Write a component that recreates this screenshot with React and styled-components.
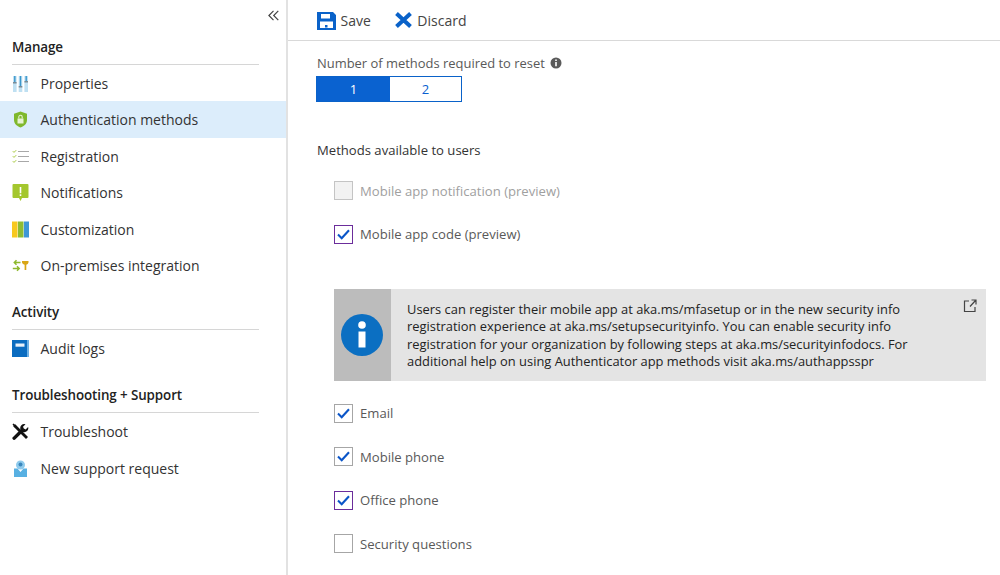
import React from 'react';
import styled, { createGlobalStyle } from 'styled-components';

const Global = createGlobalStyle`
  html, body { margin: 0; padding: 0; background: #fff; overflow: hidden; }
  body { font-family: "Open Sans", "Noto Sans", "Liberation Sans", sans-serif; }
`;
const Page = styled.div`display: flex; width: 1000px; height: 575px; overflow: hidden; background: #fff;`;
const Sidebar = styled.aside`width: 286px; flex: none; border-right: 2px solid #e2e2e2; display: flex; flex-direction: column;`;
const CollapseRow = styled.div`height: 30px; display: flex; align-items: center; justify-content: flex-end; padding-right: 7px;`;
const SectionHeading = styled.h2`
  margin: ${p => (p.$first ? '0' : '12px')} 27px 0 12px; height: 33.5px; box-sizing: content-box;
  border-bottom: 1px solid #d6d6d6; display: flex; align-items: center;
  font-size: 13.4px; font-weight: 600; color: #222; letter-spacing: -0.1px;
`;
const NavList = styled.div`display: flex; flex-direction: column;`;
const NavRow = styled.div`
  height: 36.5px; box-sizing: border-box; padding-top: 0.8px; display: flex; align-items: center; padding-left: 12px; gap: 11.5px;
  background: ${p => (p.$active ? '#dcedfb' : 'transparent')};
  font-size: 14px; color: #333;
`;
const NavIcon = styled.svg`width: 17px; height: 17px; flex: none;`;
const Main = styled.main`flex: 1; display: flex; flex-direction: column; min-width: 0;`;
const Toolbar = styled.div`height: 40px; flex: none; border-bottom: 1px solid #d9d9d9; display: flex; align-items: center; padding-left: 29px; gap: 24px;`;
const ToolButton = styled.div`display: flex; align-items: center; gap: 4.5px; font-size: 14px; color: #444;`;
const Content = styled.div`padding: 13px 14px 0 29px; display: flex; flex-direction: column;`;
const FieldLabel = styled.div`display: flex; align-items: center; gap: 5px; height: 18px; font-size: 12.95px; color: #595959;`;
const Segments = styled.div`display: flex; width: 146px; height: 26px; margin: 4px 0 0 -1px; box-sizing: border-box; border: 1.5px solid #0a62c9;`;
const Segment = styled.div`
  flex: ${p => (p.$on ? '0 0 73px' : '1')}; display: flex; align-items: center; justify-content: center;
  font-size: 13px; background: ${p => (p.$on ? '#0a62d0' : '#fff')}; color: ${p => (p.$on ? '#fff' : '#0a5fd0')};
`;
const SectionTitle = styled.div`margin-top: 39px; height: 18px; display: flex; align-items: center; font-size: 13.1px; color: #333;`;
const CheckList = styled.div`display: flex; flex-direction: column; margin-left: 17px; margin-top: ${p => p.$top || 0}px;`;
const CheckRow = styled.div`height: 43.5px; display: flex; align-items: center; gap: 7px; font-size: 13.1px; color: ${p => (p.$off ? '#a0a0a0' : '#595959')};`;
const Box = styled.span`
  width: 19px; height: 19px; box-sizing: border-box; flex: none; display: flex; align-items: center; justify-content: center;
  border: 1px solid ${p => (p.$focus ? '#6b2d9b' : p.$off ? '#c4c4c4' : '#a6a6a6')};
  background: ${p => (p.$off ? '#f2f2f2' : '#fff')};
`;
const InfoBox = styled.div`margin: 33px 0 10.5px 17px; width: 652px; height: 92px; display: flex; background: #e4e4e4; position: relative;`;
const InfoSide = styled.div`width: 57px; flex: none; box-sizing: border-box; padding-right: 1px; background: #bcbcbc; display: flex; align-items: center; justify-content: center;`;
const InfoText = styled.p`margin: 0; padding: 11.5px 0 0 16px; width: 540px; font-size: 12.9px; line-height: 17.6px; color: #222;`;
const OpenLink = styled.svg`position: absolute; top: 10px; right: 9px; width: 14px; height: 14px;`;

const Check = () => (
  <svg width="13" height="11" viewBox="0 0 13 11"><path d="M1 5.6 4.7 9.2 12 1.2" fill="none" stroke="#0a55c8" strokeWidth="2.1" /></svg>
);

const Item = ({ checked, focus, off, children }) => (
  <CheckRow $off={off}>
    <Box $focus={focus} $off={off}>{checked && <Check />}</Box>
    {children}
  </CheckRow>
);

const icons = {
  properties: (
    <NavIcon viewBox="0 0 17 17">
      <path d="M1 1h3.600v16H1zM6.700 1h3.600v16H6.700zM12.400 1h3.600v16h-3.600z" fill="#bfe0f2" />
      <path d="M2.100 1h1.400v6H2.100zM7.800 1h1.400v10H7.800zM13.500 1h1.400v5h-1.400z" fill="#3c97cc" />
      <path d="M1 7h3.600v1.600H1zM6.700 11h3.600v1.600H6.700zM12.400 6h3.600v1.600h-3.600z" fill="#7b8b96" />
    </NavIcon>
  ),
  auth: (
    <NavIcon viewBox="0 0 17 17">
      <path d="M8.500.5 15 2.800v6c0 4-3 6.500-6.500 7.700C5 15.300 2 12.800 2 8.800v-6z" fill="#7fb82c" />
      <path d="M5.500 7.500h6v5h-6z" fill="#e8f3d2" />
      <path d="M6.800 7.500V6a1.700 1.700 0 0 1 3.400 0v1.500" fill="none" stroke="#e8f3d2" strokeWidth="1.100" />
    </NavIcon>
  ),
  registration: (
    <NavIcon viewBox="0 0 17 17">
      <path d="M6 3.500h11M6 8.500h11M6 13.500h11" stroke="#a8a8a8" strokeWidth="1.200" />
      <path d="M.8 3.200 2 4.400 4.200 2.200M.8 8.200 2 9.400 4.200 7.200M.8 13.200 2 14.400 4.200 12.200" fill="none" stroke="#a6c83c" strokeWidth="1" />
    </NavIcon>
  ),
  notifications: (
    <NavIcon viewBox="0 0 17 17">
      <path d="M1.500 0h14a1 1 0 0 1 1 1v12a1 1 0 0 1-1 1H10l-1.500 3L7 14H1.500a1 1 0 0 1-1-1V1a1 1 0 0 1 1-1z" fill="#a4c72e" />
      <path d="M7.700 3h1.600v6.200H7.700zM7.700 10.300h1.600v1.700H7.700z" fill="#fff" />
    </NavIcon>
  ),
  customization: (
    <NavIcon viewBox="0 0 17 17">
      <path d="M0 .5h5v16H0z" fill="#f8c81e" />
      <path d="M6 .5h5v16H6z" fill="#8ebc33" />
      <path d="M12 .5h5v16h-5z" fill="#3e97d6" />
      <path d="M5 .5h1v16H5z" fill="#f5e08a" />
      <path d="M11 .5h1v16h-1z" fill="#b7d8a0" />
    </NavIcon>
  ),
  premises: (
    <NavIcon viewBox="0 0 17 17">
      <path d="M8.500 5.500H2.500M4.500 3.300 2.300 5.500l2.200 2.200M.8 11.500h6M5 9.300 7.200 11.500 5 13.700" fill="none" stroke="#8eb92d" strokeWidth="1.500" />
      <path d="M10 4h6.500v1.500a3 3 0 0 1-2.200 2.300V13h-1.700V7.800A3 3 0 0 1 10 5.500z" fill="#d9a616" />
    </NavIcon>
  ),
  audit: (
    <NavIcon viewBox="0 0 17 17">
      <path d="M0 0h16v17H0z" fill="#0b6cc0" />
      <path d="M15 0h2v17h-2z" fill="#6db0e4" />
      <path d="M3.500 3.500h9v3.200h-9z" fill="#e8f1fa" />
    </NavIcon>
  ),
  trouble: (
    <NavIcon viewBox="0 0 17 17">
      <path d="M1.200 3.200 3.200 1.200 16 14l-2 2z" fill="#111" />
      <path d="M.5 1.500 1.500.5l3 2.500-1.500 1.500z" fill="#111" />
      <path d="M1 14l7.500-7.500a4 4 0 0 1 5-5.200L11 3.800l.8 1.800 1.800.8 2.500-2.500a4 4 0 0 1-5.200 5L3.200 16.500a1.500 1.500 0 0 1-2.200-2.500z" fill="#111" />
    </NavIcon>
  ),
  support: (
    <NavIcon viewBox="0 0 17 17">
      <path d="M2 8.500h3.500L8.500 12l3-3.500H15V17H2z" fill="#58b0e2" />
      <circle cx="8.500" cy="5" r="4.500" fill="#8fcbed" />
      <circle cx="8.500" cy="4.500" r="2" fill="#3a87bd" />
    </NavIcon>
  ),
};

const manage = [
  ['properties', 'Properties'], ['auth', 'Authentication methods'], ['registration', 'Registration'],
  ['notifications', 'Notifications'], ['customization', 'Customization'], ['premises', 'On-premises integration'],
];

export default function App() {
  return (
    <Page>
      <Global />
      <Sidebar>
        <CollapseRow>
          <svg width="11" height="11" viewBox="0 0 11 11"><path d="M5.500.8.900 5.500l4.600 4.700M10.300.8 5.700 5.500l4.600 4.700" fill="none" stroke="#444" strokeWidth="1.200" /></svg>
        </CollapseRow>
        <SectionHeading $first>Manage</SectionHeading>
        <NavList>
          {manage.map(([k, t]) => <NavRow key={k} $active={k === 'auth'}>{icons[k]}{t}</NavRow>)}
        </NavList>
        <SectionHeading>Activity</SectionHeading>
        <NavList><NavRow>{icons.audit}Audit logs</NavRow></NavList>
        <SectionHeading>Troubleshooting + Support</SectionHeading>
        <NavList>
          <NavRow>{icons.trouble}Troubleshoot</NavRow>
          <NavRow>{icons.support}New support request</NavRow>
        </NavList>
      </Sidebar>
      <Main>
        <Toolbar>
          <ToolButton>
            <svg width="19" height="19" viewBox="0 0 19 19"><path fillRule="evenodd" d="M0 1h16l3 3v15H0zM4 3v4.500h9V3zM3 10.500V17h13v-6.500z" fill="#0a62c9" /><rect x="8" y="14" width="2.500" height="2.500" fill="#0a62c9" /></svg>
            Save
          </ToolButton>
          <ToolButton>
            <svg width="18" height="18" viewBox="0 0 18 18"><path d="M1.500 2.500 15.500 15.500M15.500 2.500 1.500 15.500" stroke="#0a62c9" strokeWidth="4" /></svg>
            Discard
          </ToolButton>
        </Toolbar>
        <Content>
          <FieldLabel>
            Number of methods required to reset
            <svg width="12" height="12" viewBox="0 0 12 12"><circle cx="6" cy="6" r="5.500" fill="#5a5a5a" /><path d="M5.200 5h1.600v4.200H5.200zM5.200 2.500h1.600v1.500H5.200z" fill="#fff" /></svg>
          </FieldLabel>
          <Segments>
            <Segment $on>1</Segment>
            <Segment>2</Segment>
          </Segments>
          <SectionTitle>Methods available to users</SectionTitle>
          <CheckList $top={10}>
            <Item off>Mobile app notification (preview)</Item>
            <Item checked focus>Mobile app code (preview)</Item>
          </CheckList>
          <InfoBox>
            <InfoSide>
              <svg width="42" height="42" viewBox="0 0 42 42"><circle cx="21" cy="21" r="21" fill="#0b6fc2" /><circle cx="21" cy="11" r="3.800" fill="#fff" /><path d="M17.500 17.500h7v16h-7z" fill="#fff" /></svg>
            </InfoSide>
            <InfoText>Users can register their mobile app at aka.ms/mfasetup or in the new security info registration experience at aka.ms/setupsecurityinfo. You can enable security info registration for your organization by following steps at aka.ms/securityinfodocs. For additional help on using Authenticator app methods visit aka.ms/authappsspr</InfoText>
            <OpenLink viewBox="0 0 14 14"><path d="M6 2H1.500v10.500H12V8M7 7.500 12.500 1.500M8.500 1h4.500v4.500" fill="none" stroke="#444" strokeWidth="1.200" /></OpenLink>
          </InfoBox>
          <CheckList>
            <Item checked>Email</Item>
            <Item checked>Mobile phone</Item>
            <Item checked focus>Office phone</Item>
            <Item>Security questions</Item>
          </CheckList>
        </Content>
      </Main>
    </Page>
  );
}
